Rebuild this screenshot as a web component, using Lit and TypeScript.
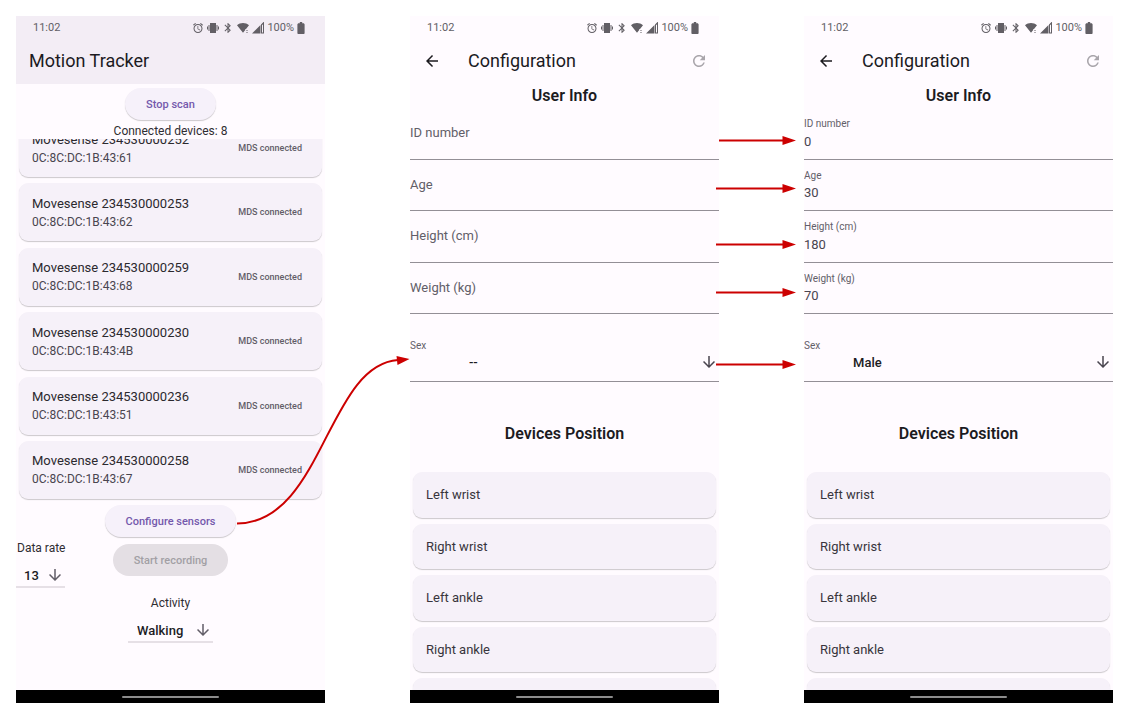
import { LitElement, html, css, svg } from "lit";
import { customElement, property } from "lit/decorators.js";

const base = css`
  * { box-sizing: border-box; }
  :host { font-family: Roboto, sans-serif; color: #1c1b1f; }
  button, input, select { font: inherit; color: inherit; margin: 0; padding: 0; border: 0; background: none; }
  h1, h2, p, ul { margin: 0; padding: 0; list-style: none; font-weight: 400; }
  svg { display: block; flex: none; fill: currentColor; }
`;

const PATHS = {
  alarm: "M22 5.72l-4.6-3.86-1.29 1.53 4.6 3.86L22 5.72zM7.88 3.39L6.6 1.86 2 5.71l1.29 1.53 4.59-3.85zM12.5 8H11v6l4.75 2.85.75-1.23-4-2.37V8zM12 4c-4.97 0-9 4.03-9 9s4.02 9 9 9c4.97 0 9-4.03 9-9s-4.03-9-9-9zm0 16c-3.87 0-7-3.13-7-7s3.13-7 7-7 7 3.13 7 7-3.13 7-7 7z",
  vibrate: "M6 2h12v20H6zM3 6H5V18H3zM19 6h2v12h-2zM0 9h2v6H0zM22 9h2v6h-2z",
  bluetooth: "M17.71 7.71L12 2h-1v7.59L6.41 5 5 6.41 10.59 12 5 17.59 6.41 19 11 14.41V22h1l5.71-5.71-4.3-4.29 4.3-4.29zM13 5.83l1.88 1.88L13 9.59V5.83zm1.88 10.46L13 18.17v-3.76l1.88 1.88z",
  wifi: "M12 2C7.500 2 3.300 3.700 0 6.500L12 21.500l4.500-5.600V14h1.500L24 6.500C20.700 3.700 16.500 2 12 2zM19 16h2v2h-2zM19 20h2v2h-2z",
  signal: "M0 23H17V6zM18 5V23H24V-1zM20 6.500L22 4.500V21H20z",
  battery: "M15.670 4H14V2h-4v2H8.330C7 4 6 5 6 6.300v14.300C6 21.400 6.600 22 7.330 22h9.330C17.400 22 18 21.400 18 20.670V6.300C18 5 17 4 15.670 4z",
  refresh: "M17.65 6.35C16.2 4.9 14.21 4 12 4c-4.42 0-7.99 3.58-7.99 8s3.57 8 7.99 8c3.73 0 6.84-2.55 7.73-6h-2.08c-.82 2.33-3.04 4-5.65 4-3.31 0-6-2.69-6-6s2.69-6 6-6c1.66 0 3.14.69 4.22 1.78L13 11h7V4l-2.35 2.35z",
  back: "M20 11H7.83l5.59-5.59L12 4l-8 8 8 8 1.41-1.41L7.83 13H20v-2z",
  down: "M20 12l-1.41-1.41L13 16.17V4h-2v12.17l-5.58-5.59L4 12l8 8 8-8z",
};

const icon = (name: keyof typeof PATHS, size: number, box = "0 0 24 24", width = size) => html`
  <svg width=${width} height=${size} viewBox=${box} aria-hidden="true">
    <path fill-rule="evenodd" d=${PATHS[name]}></path>
  </svg>`;

@customElement("phone-frame")
class PhoneFrame extends LitElement {
  @property({ type: Boolean, reflect: true }) tinted = false;

  static styles = [base, css`
    :host { display: flex; flex-direction: column; min-width: 0; min-height: 0; background: #fffbff; }
    .top { flex: none; padding-bottom: 1px; }
    :host([tinted]) .top { background: #f3edf5; }
    .status { display: flex; align-items: center; height: 23px; padding: 0 20px 0 17px; font-size: 11px; color: #625f65; }
    .time { margin-right: auto; }
    .icons { display: flex; align-items: center; gap: 3px; }
    .bar { display: flex; align-items: center; height: 44px; padding: 0 11px 0 13px; }
    .body { flex: 1; min-height: 0; display: flex; flex-direction: column; overflow: hidden; }
    .nav { flex: none; display: flex; align-items: center; justify-content: center; height: 13px; background: #000; }
    .pill { width: 97px; height: 2px; border-radius: 1px; background: #8c8c8c; }
  `];

  render() {
    return html`
      <header class="top">
        <div class="status">
          <span class="time">11:02</span>
          <span class="icons">
            ${icon("alarm", 12)} ${icon("vibrate", 12)} ${icon("bluetooth", 12)}
            ${icon("wifi", 12)} ${icon("signal", 12)}
            <span>100%</span>
            ${icon("battery", 12, "6 2 12 20", 8)}
          </span>
        </div>
        <div class="bar"><slot name="bar"></slot></div>
      </header>
      <div class="body"><slot></slot></div>
      <div class="nav"><div class="pill"></div></div>
    `;
  }
}

@customElement("tracker-screen")
class TrackerScreen extends LitElement {
  devices = [
    ["234530000252", "0C:8C:DC:1B:43:61"],
    ["234530000253", "0C:8C:DC:1B:43:62"],
    ["234530000259", "0C:8C:DC:1B:43:68"],
    ["234530000230", "0C:8C:DC:1B:43:4B"],
    ["234530000236", "0C:8C:DC:1B:43:51"],
    ["234530000258", "0C:8C:DC:1B:43:67"],
  ];

  static styles = [base, css`
    :host { display: grid; min-width: 0; min-height: 0; }
    h1 { font-size: 18px; line-height: 24px; }
    .btn {
      flex: none; align-self: center; height: 32px; padding: 0 21px; border-radius: 16px;
      background: #f6f1fa; color: #7459ac; font-size: 11px; font-weight: 500;
      box-shadow: 0 1px 1px rgba(0, 0, 0, 0.2);
    }
    .btn:disabled { background: #e4dfe4; color: #a29fa4; box-shadow: none; }
    .scan { margin-top: 4px; }
    .count { flex: none; margin-top: 3px; font-size: 12px; line-height: 16px; text-align: center; color: #2f2d32; }
    .scroller { flex: 1; min-height: 0; display: flex; flex-direction: column; overflow: hidden; padding: 0 3px 2px; }
    .devices { flex: 1; margin-top: -20px; display: flex; flex-direction: column; justify-content: space-between; }
    .device {
      flex: none; display: flex; align-items: center; justify-content: space-between; height: 58px;
      padding: 0 20px 0 13px; border-radius: 9px; background: #f6f1f9;
      box-shadow: 0 1px 1px rgba(0, 0, 0, 0.2);
    }
    .name { font-size: 13px; line-height: 19px; color: #2b292e; }
    .address { font-size: 12px; line-height: 18px; color: #49454f; }
    .state { font-size: 9px; font-weight: 500; color: #625e68; }
    .configure { margin-top: 4px; }
    .row { flex: none; display: grid; grid-template-columns: 1fr auto 1fr; align-items: start; margin-top: 4px; }
    .record { margin-top: 3px; align-self: start; }
    .choice { display: flex; flex-direction: column; align-items: start; width: max-content; font-size: 12px; }
    .choice label { line-height: 15px; padding: 0 1px; color: #2f2d32; }
    .activity { align-self: center; align-items: center; margin: 8px 0 47px; }
    .pick { display: grid; align-items: center; justify-items: end; margin-top: 8px; border-bottom: 2px solid #e6e0e6; }
    .pick select, .pick svg { grid-area: 1 / 1; }
    .pick select { appearance: none; height: 22px; padding: 0 29px 0 9px; font-size: 13px; font-weight: 500; }
    .pick .rate { padding: 0 26px 0 8px; }
    .pick svg { margin-right: 1px; color: #625e68; pointer-events: none; }
  `];

  render() {
    return html`
      <phone-frame tinted>
        <h1 slot="bar">Motion Tracker</h1>
        <button class="btn scan">Stop scan</button>
        <p class="count">Connected devices: 8</p>
        <div class="scroller">
          <ul class="devices">
            ${this.devices.map(([serial, address]) => html`
              <li class="device">
                <div>
                  <p class="name">Movesense ${serial}</p>
                  <p class="address">${address}</p>
                </div>
                <span class="state">MDS connected</span>
              </li>`)}
          </ul>
        </div>
        <button class="btn configure">Configure sensors</button>
        <div class="row">
          <div class="choice">
            <label for="rate">Data rate</label>
            <div class="pick">
              <select id="rate" class="rate"><option>13</option></select>
              ${icon("down", 18)}
            </div>
          </div>
          <button class="btn record" disabled>Start recording</button>
        </div>
        <div class="choice activity">
          <label for="activity">Activity</label>
          <div class="pick">
            <select id="activity"><option>Walking</option></select>
            ${icon("down", 18)}
          </div>
        </div>
      </phone-frame>
    `;
  }
}

@customElement("config-screen")
class ConfigScreen extends LitElement {
  @property({ attribute: false }) values: string[] = ["", "", "", ""];
  @property() sex = "--";

  static styles = [base, css`
    :host { display: grid; min-width: 0; min-height: 0; }
    .head { flex: 1; display: flex; align-items: center; }
    .head button { display: grid; }
    .head .reload { margin-left: auto; color: #a9a5ab; }
    h1 { margin-left: 27px; font-size: 18px; line-height: 24px; }
    h2 { flex: none; font-size: 16px; line-height: 24px; font-weight: 600; text-align: center; }
    .fields { flex: none; display: grid; grid-template-rows: repeat(4, 1fr); height: 206px; }
    .field { display: grid; grid-template-rows: 16px 18px; padding-top: 8px; border-bottom: 1px solid #938f96; color: #49454f; }
    .field label { font-size: 10px; line-height: 16px; color: #625e68; }
    .field input { width: 100%; min-width: 0; font-size: 13px; outline: none; }
    .field.empty label { grid-area: 1 / 1 / 3 / 2; align-self: center; font-size: 13px; }
    .field.empty input { grid-area: 1 / 1 / 3 / 2; }
    .field.sex { flex: none; grid-template-rows: 15px 18px; padding-top: 24px; height: 68px; }
    .pick { display: grid; align-items: center; justify-items: end; }
    .pick select, .pick svg { grid-area: 1 / 1; }
    .pick select { appearance: none; width: 100%; height: 18px; padding-right: 59%; text-align: center; font-size: 13px; font-weight: 500; color: #1c1b1f; }
    .pick svg { margin-right: 1px; pointer-events: none; }
    .position { margin: 40px 0 26px; }
    .places { flex: none; display: grid; grid-template-rows: repeat(5, 1fr); gap: 6px; height: 252px; padding: 0 3px; }
    .place {
      display: flex; align-items: center; padding: 0 13px; border-radius: 9px; background: #f6f1f9;
      font-size: 13px; color: #38353c; box-shadow: 0 1px 1px rgba(0, 0, 0, 0.2);
    }
  `];

  render() {
    const labels = ["ID number", "Age", "Height (cm)", "Weight (kg)"];
    const places = ["Left wrist", "Right wrist", "Left ankle", "Right ankle"];
    return html`
      <phone-frame>
        <div class="head" slot="bar">
          <button aria-label="Back">${icon("back", 18)}</button>
          <h1>Configuration</h1>
          <button class="reload" aria-label="Refresh">${icon("refresh", 18)}</button>
        </div>
        <h2>User Info</h2>
        <div class="fields">
          ${labels.map((label, i) => html`
            <div class=${this.values[i] ? "field" : "field empty"}>
              <label for="field-${i}">${label}</label>
              <input id="field-${i}" type="text" .value=${this.values[i]} />
            </div>`)}
        </div>
        <div class="field sex">
          <label for="sex">Sex</label>
          <div class="pick">
            <select id="sex"><option>${this.sex}</option></select>
            ${icon("down", 18)}
          </div>
        </div>
        <h2 class="position">Devices Position</h2>
        <div class="places">
          ${places.map((p) => html`<div class="place">${p}</div>`)}
          <div class="place"></div>
        </div>
      </phone-frame>
    `;
  }
}

@customElement("app-root")
class AppRoot extends LitElement {
  static styles = [base, css`
    :host { display: block; position: relative; background: #fff; }
    .board {
      display: grid; grid-template-columns: repeat(3, minmax(0, 1fr)); grid-template-rows: minmax(0, 1fr);
      column-gap: 85px; height: 100vh; padding: 16px 24px 21px 16px;
    }
    .arrows { position: absolute; inset: 0; width: 100%; height: 100%; pointer-events: none; }
    .line { fill: none; stroke: #cc0000; stroke-width: 2; }
    .tip { fill: #cc0000; }
  `];

  render() {
    const arrows = [[719, 140.5], [716, 188.5], [716, 244.5], [716, 292.5], [716, 364.5]];
    return html`
      <main class="board">
        <tracker-screen></tracker-screen>
        <config-screen></config-screen>
        <config-screen .values=${["0", "30", "180", "70"]} sex="Male"></config-screen>
      </main>
      <svg class="arrows" viewBox="0 0 1137 724" preserveAspectRatio="none" aria-hidden="true">
        <path class="line" d="M237 523.500C323 523 327 365 398 360"></path>
        <path class="tip" d="M409.500 359L396.500 356L397.500 365z"></path>
        ${arrows.map(([x, y]) => svg`
          <path class="line" d="M${x} ${y}H784"></path>
          <path class="tip" d="M796 ${y}L782.500 ${y - 4.5}V${y + 4.5}z"></path>`)}
      </svg>
    `;
  }
}
